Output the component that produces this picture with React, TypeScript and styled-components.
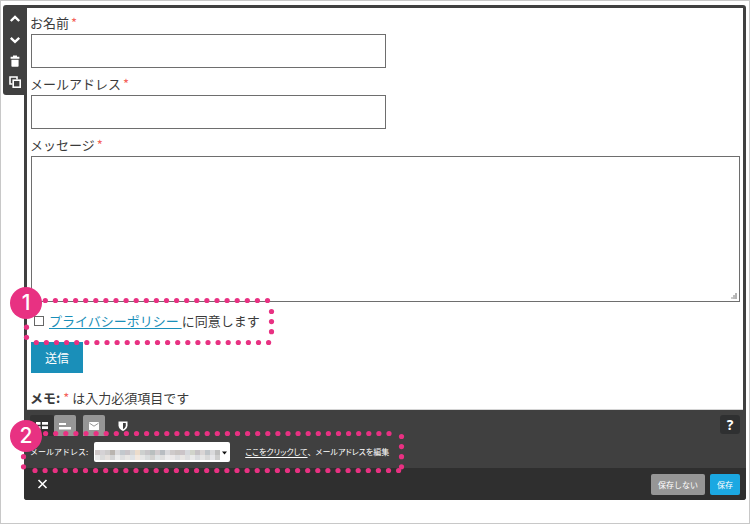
import React from 'react';
import styled, { createGlobalStyle } from 'styled-components';

const PINK = '#e83182';

const GlobalStyle = createGlobalStyle`
  *, *::before, *::after { box-sizing: border-box; }
  html, body, #root { height: 100%; }
  body {
    margin: 0;
    background: #fff;
    color: #3a3a3a;
    font-family: 'Noto Sans CJK JP', sans-serif;
    font-size: 13px;
    line-height: 22px;
  }
  button, input, select, textarea { font: inherit; }
`;

const Frame = styled.main`
  display: flex;
  align-items: flex-start;
  min-height: 100%;
  padding: 4px 3px 23px 2px;
  border: 1px solid #c8c8c8;
`;

const Rail = styled.nav`
  display: flex;
  flex-direction: column;
  flex: none;
  width: 21px;
  height: 90px;
  padding: 3px 0 2px;
  border-radius: 3px 0 0 3px;
  background: #404040;
`;

const RailButton = styled.button`
  display: flex;
  flex: 1;
  align-items: center;
  justify-content: center;
  padding: 0 0 0 3px;
  border: 0;
  background: none;
  color: #fff;
`;

const Panel = styled.section`
  flex: 1;
  min-width: 0;
  padding-top: 3px;
  border-radius: 0 3px 3px 3px;
  background: #404040;
`;

const Form = styled.form`
  display: flex;
  flex-direction: column;
  gap: 5px;
  margin: 0 3px;
  padding: 4px 3px 0;
  border-bottom: 1px solid #d4d4d4;
  background: #fff;
`;

const Field = styled.div`
  display: flex;
  flex-direction: column;
`;

const Label = styled.label``;

const Required = styled.span`
  color: #f4625a;
`;

const FieldMark = styled(Required)`
  margin-left: 2px;
`;

const TextInput = styled.input`
  width: 50%;
  height: 34px;
  margin-left: 1px;
  padding: 0 8px;
  border: 1px solid #6e6e6e;
  border-radius: 0;
  background: #fff;
`;

const MessageBox = styled.textarea`
  display: block;
  height: 146px;
  margin-left: 1px;
  padding: 8px;
  border: 1px solid #6e6e6e;
  border-radius: 0;
  background: #fff;
  resize: vertical;

  &::-webkit-resizer {
    background:
      linear-gradient(#b4b4b4, #b4b4b4) right 2px bottom 2px / 2px 6px no-repeat,
      linear-gradient(#bcbcbc, #bcbcbc) right 4px bottom 2px / 2px 4px no-repeat,
      linear-gradient(#cacaca, #cacaca) right 6px bottom 2px / 2px 2px no-repeat;
  }
`;

const ConsentRow = styled.div`
  position: relative;
  display: flex;
  align-items: center;
  height: 28px;
  padding-left: 4px;
`;

const Checkbox = styled.input`
  appearance: none;
  width: 10px;
  height: 10px;
  margin: 0 5px 0 0;
  border: 1px solid #666;
  background: #fff;
`;

const PolicyLink = styled.a`
  color: #1a8fb9;
  text-decoration: underline;
  text-underline-offset: 2px;
  white-space: pre;
`;

const Submit = styled.button`
  align-self: flex-start;
  height: 31px;
  margin: 2px 0 0 1px;
  padding: 0 14px;
  border: 0;
  background: #1a8fb9;
  color: #fff;
  font-size: 12px;
  line-height: 30px;
`;

const Memo = styled.p`
  margin: 9px 0 0;
`;

const Toolbar = styled.div`
  display: flex;
  align-items: flex-start;
  height: 26px;
  padding: 5px 6px 0;
`;

const Tab = styled.button<{ $tone?: string; $gap?: boolean }>`
  display: flex;
  align-items: center;
  justify-content: center;
  width: ${p => (p.$tone === '#333333' ? 24 : 22)}px;
  height: 21px;
  margin-left: ${p => (p.$gap ? 7 : 0)}px;
  padding: 0;
  border: 0;
  border-radius: 2px 2px 0 0;
  background: ${p => p.$tone ?? 'none'};
  color: #fff;
`;

const Help = styled.button`
  width: 20px;
  height: 19px;
  margin-left: auto;
  padding: 0;
  border: 0;
  border-radius: 3px;
  background: #2f3031;
  color: #fff;
  font: bold 14px/19px 'Open Sans', sans-serif;
`;

const AddressRow = styled.div`
  position: relative;
  display: flex;
  align-items: center;
  height: 32px;
  padding: 0 6px;
  color: #fff;
  font-size: 8px;
  line-height: 12px;
`;

const SelectWrap = styled.span`
  position: relative;
  width: 136px;
  height: 20px;
  margin: 0 15px 0 6px;
`;

const Select = styled.select`
  display: block;
  appearance: none;
  width: 100%;
  height: 100%;
  border: 0;
  border-radius: 2px;
  background: #fff;
`;

const SelectArt = styled.svg`
  position: absolute;
  inset: 0;
  pointer-events: none;
`;

const Compact = styled.span`
  font-feature-settings: 'palt';
`;

const EditLink = styled.a`
  color: #fff;
  font-feature-settings: 'palt';
  text-underline-offset: 2px;
`;

const Footer = styled.footer`
  display: flex;
  align-items: center;
  gap: 5px;
  height: 32px;
  padding: 0 6px 0 12px;
  border-radius: 0 0 3px 3px;
  background: #2f2f2f;
`;

const Close = styled.button`
  display: flex;
  margin-right: auto;
  padding: 0;
  border: 0;
  background: none;
  color: #fff;
`;

const Action = styled.button<{ $primary?: boolean }>`
  height: 21px;
  padding: 0 7px;
  border: 0;
  border-radius: 2px;
  background: ${p => (p.$primary ? '#1ba8e2' : '#969696')};
  color: #fff;
  font-size: 8px;
  line-height: 21px;
`;

const Overlay = styled.svg<{ $top: number; $left: number }>`
  position: absolute;
  top: ${p => p.$top}px;
  left: ${p => p.$left}px;
  z-index: 1;
  overflow: visible;
  pointer-events: none;
`;

const Badge = styled.span<{ $top: number; $left: number }>`
  position: absolute;
  top: ${p => p.$top}px;
  left: ${p => p.$left}px;
  z-index: 2;
  width: 32px;
  height: 32px;
  border-radius: 50%;
  background: ${PINK};
  color: #fff;
  font: 500 21px/32px Inter, sans-serif;
  text-align: center;
`;

/* A dotted line: start point, number of dots, direction. */
type Line = [x: number, y: number, count: number, dir: 'h' | 'v'];

function Dots({ lines, top, left, width, height }: {
  lines: Line[]; top: number; left: number; width: number; height: number;
}) {
  return (
    <Overlay $top={top} $left={left} width={width} height={height} aria-hidden="true">
      {lines.map(([x, y, count, dir], l) =>
        Array.from({ length: count }, (_, i) => (
          <circle
            key={`${l}-${i}`}
            cx={x + (dir === 'h' ? i * 10.1 : 0)}
            cy={y + (dir === 'v' ? i * 10.1 : 0)}
            r="2.6"
            fill={PINK}
          />
        )),
      )}
    </Overlay>
  );
}

const MOSAIC = [
  ['#cfc8c8', '#d5d2d5', '#cdcbcb', '#b9b4af', '#dad9db', '#c3c8cd', '#c9c4c8', '#d5d5d6', '#ecdccb', '#cdd0cf', '#c7c5c8', '#b9bfbf', '#d1ccce', '#b8bdc2', '#d9d9dc', '#cecaca', '#c9c4c2', '#cbc4c8', '#d6d8dc', '#d1d4cb', '#c6c2c5', '#d9d5d5', '#bfc4c8', '#dadadc', '#bebebe'],
  ['#eaeaea', '#dadada', '#e5e0dd', '#d3d3d4', '#ececec', '#dededf', '#e8e6e4', '#dfe2e5', '#f2e8df', '#e6e6e6', '#d9dcdd', '#d2d1cf', '#e0e4e5', '#dedede', '#ececed', '#ebe8e8', '#dfdfe1', '#e8e5e3', '#dedee0', '#e9e9e9', '#dadcdf', '#e5e5e5', '#d8d8d8', '#e6e6e9', '#cdcdcd'],
];

export default function App() {
  return (
    <>
      <GlobalStyle />
      <Frame>
        <Rail aria-label="ブロック操作">
          <RailButton type="button" aria-label="上へ">
            <svg width="12" height="12" viewBox="0 0 12 12" fill="none" stroke="currentColor" strokeWidth="2.4"><path d="M1.800 8 6 4l4.200 4" /></svg>
          </RailButton>
          <RailButton type="button" aria-label="下へ">
            <svg width="12" height="12" viewBox="0 0 12 12" fill="none" stroke="currentColor" strokeWidth="2.4"><path d="M1.800 3.800 6 7.800l4.200-4" /></svg>
          </RailButton>
          <RailButton type="button" aria-label="削除">
            <svg width="12" height="12" viewBox="0 0 12 12" fill="currentColor"><path d="M4 .5h4v1.300h2.400v2H1.600v-2H4zM2.400 4.800h7.200V11a.8.8 0 0 1-.8.8H3.200a.8.8 0 0 1-.8-.8z" /></svg>
          </RailButton>
          <RailButton type="button" aria-label="複製">
            <svg width="12" height="12" viewBox="0 0 12 12" fill="none" stroke="currentColor" strokeWidth="1.6"><path d="M3.500 8H1V1h7v2.500" /><rect x="4.200" y="4.200" width="7" height="7" strokeWidth="1.6" /></svg>
          </RailButton>
        </Rail>
        <Panel>
          <Form onSubmit={e => e.preventDefault()}>
            <Field>
              <Label htmlFor="name">お名前<FieldMark>*</FieldMark></Label>
              <TextInput id="name" type="text" />
            </Field>
            <Field>
              <Label htmlFor="email">メールアドレス<FieldMark>*</FieldMark></Label>
              <TextInput id="email" type="email" />
            </Field>
            <Field>
              <Label htmlFor="message">メッセージ<FieldMark>*</FieldMark></Label>
              <MessageBox id="message" />
            </Field>
            <ConsentRow>
              <Checkbox id="consent" type="checkbox" />
              <Label htmlFor="consent"><PolicyLink href="#policy">プライバシーポリシー </PolicyLink>に同意します</Label>
              <Dots
                top={-7}
                left={0}
                width={250}
                height={50}
                lines={[[15.3, 0.5, 23, 'h'], [241.5, 11.5, 3, 'v'], [6.3, 42.5, 24, 'h'], [-3.5, 27.2, 2, 'v']]}
              />
              <Badge $top={-20} $left={-20}>1</Badge>
            </ConsentRow>
            <Submit type="submit">送信</Submit>
            <Memo><strong>メモ:</strong> <Required>*</Required> は入力必須項目です</Memo>
          </Form>
          <Toolbar>
            <Tab type="button" $tone="#333333" aria-label="項目">
              <svg width="12" height="9" viewBox="0 0 12 9" fill="currentColor"><path d="M0 1h4.500v2.800H0zM6 1h6v2.800H6zM0 5.200h4.500V8H0zM6 5.200h6V8H6z" /></svg>
            </Tab>
            <Tab type="button" $tone="#969696" aria-label="配置">
              <svg width="12" height="8" viewBox="0 0 12 8" fill="currentColor"><path d="M0 1h7v2H0zM0 5h12v2.400H0z" /></svg>
            </Tab>
            <Tab type="button" $tone="#969696" $gap aria-label="メール">
              <svg width="10" height="8" viewBox="0 0 10 8"><rect width="10" height="8" rx=".6" fill="currentColor" /><path d="m.5 1.200 4.500 3 4.500-3" fill="none" stroke="#969696" strokeWidth="1" /></svg>
            </Tab>
            <Tab type="button" $gap aria-label="保護">
              <svg width="10" height="10" viewBox="0 0 10 10"><path d="M.5.5h9v3.800C9.500 7 7.500 9 5 10 2.500 9 .5 7 .5 4.300z" fill="currentColor" /><path d="M5 2h2.800v2.300C7.800 6 6.800 7.400 5 8.300z" fill="#404040" /></svg>
            </Tab>
            <Help type="button" aria-label="ヘルプ">?</Help>
          </Toolbar>
          <AddressRow>
            <label htmlFor="recipient">メールアドレス:</label>
            <SelectWrap>
              <Select id="recipient" />
              <SelectArt width="136" height="20" viewBox="0 0 136 20" aria-hidden="true">
                {MOSAIC.map((row, r) => row.map((fill, c) => (
                  <rect key={`${r}-${c}`} x={1 + c * 5} y={8 + r * 5} width="5" height="5" fill={fill} />
                )))}
                <path d="M128 9.500h5l-2.500 3z" fill="#111" />
              </SelectArt>
            </SelectWrap>
            <span><EditLink href="#edit">ここをクリックして</EditLink>、<Compact>メールアドレスを編集</Compact></span>
            <Dots
              top={-3}
              left={0}
              width={380}
              height={40}
              lines={[[21.6, 0.5, 35, 'h'], [377.5, 3.5, 4, 'v'], [11, 37.5, 37, 'h'], [-0.5, 23.7, 2, 'v']]}
            />
            <Badge $top={-16} $left={-14}>2</Badge>
          </AddressRow>
          <Footer>
            <Close type="button" aria-label="閉じる">
              <svg width="13" height="12" viewBox="0 0 13 12" fill="none" stroke="currentColor" strokeWidth="1.6"><path d="m2.500 2 8 8m0-8-8 8" /></svg>
            </Close>
            <Action type="button">保存しない</Action>
            <Action type="button" $primary>保存</Action>
          </Footer>
        </Panel>
      </Frame>
    </>
  );
}
